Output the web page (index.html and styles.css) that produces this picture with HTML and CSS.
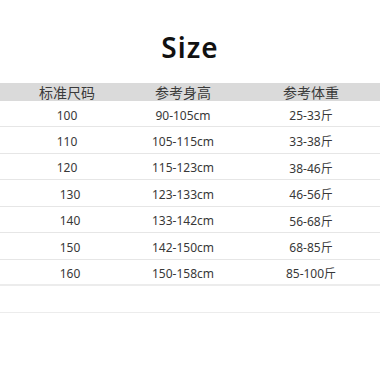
FILE: index.html
```html
<!DOCTYPE html>
<html lang="zh">
<head>
<meta charset="utf-8">
<title>Size</title>
<link rel="stylesheet" href="styles.css">
</head>
<body>
<main class="page">
  <h1 class="title">Size</h1>
  <div class="table">
    <div class="row head">
      <span class="c1">标准尺码</span><span class="c2">参考身高</span><span class="c3">参考体重</span>
    </div>
    <div class="row"><span class="c1">100</span><span class="c2">90-105cm</span><span class="c3">25-33斤</span></div>
    <div class="row"><span class="c1">110</span><span class="c2">105-115cm</span><span class="c3">33-38斤</span></div>
    <div class="row"><span class="c1">120</span><span class="c2">115-123cm</span><span class="c3">38-46斤</span></div>
    <div class="row"><span class="c1 nudge">130</span><span class="c2">123-133cm</span><span class="c3">46-56斤</span></div>
    <div class="row"><span class="c1 nudge">140</span><span class="c2">133-142cm</span><span class="c3">56-68斤</span></div>
    <div class="row"><span class="c1 nudge">150</span><span class="c2">142-150cm</span><span class="c3">68-85斤</span></div>
    <div class="row last"><span class="c1 nudge">160</span><span class="c2">150-158cm</span><span class="c3">85-100斤</span></div>
    <div class="row empty"></div>
  </div>
</main>
</body>
</html>
```
FILE: styles.css
```css
html, body {
  margin: 0;
  padding: 0;
  background: #ffffff;
}
.page {
  width: 380px;
  height: 380px;
  padding-top: 33px;
  box-sizing: border-box;
  font-family: "Noto Sans", "Noto Sans CJK SC", sans-serif;
  color: #333333;
}
.title {
  margin: 0 0 22px 0;
  font-size: 28px;
  line-height: 28px;
  font-weight: 600;
  letter-spacing: 1px;
  text-align: center;
  color: #111111;
}
.table {
  display: flex;
  flex-direction: column;
}
.row {
  display: grid;
  grid-template-columns: 134px 98px 1fr;
  align-items: center;
  height: 26.5px;
  box-sizing: border-box;
  padding-top: 3px;
  border-bottom: 1px solid #e6e6e6;
  font-size: 12px;
  letter-spacing: 0;
  color: #383838;
}
.row span {
  text-align: center;
  white-space: nowrap;
}
.row .c3 {
  padding-left: 10px;
}
.row .nudge {
  padding-left: 6px;
}
.head {
  height: 18px;
  padding-top: 2px;
  background: #dadada;
  border-bottom: none;
  font-size: 14px;
  line-height: 16px;
  color: #3a3a3a;
}
.row:nth-child(2) {
  height: 26px;
}
.last {
  border-bottom: 2px solid #ececec;
}
.empty {
  border-bottom: 1px solid #ececec;
}
```
